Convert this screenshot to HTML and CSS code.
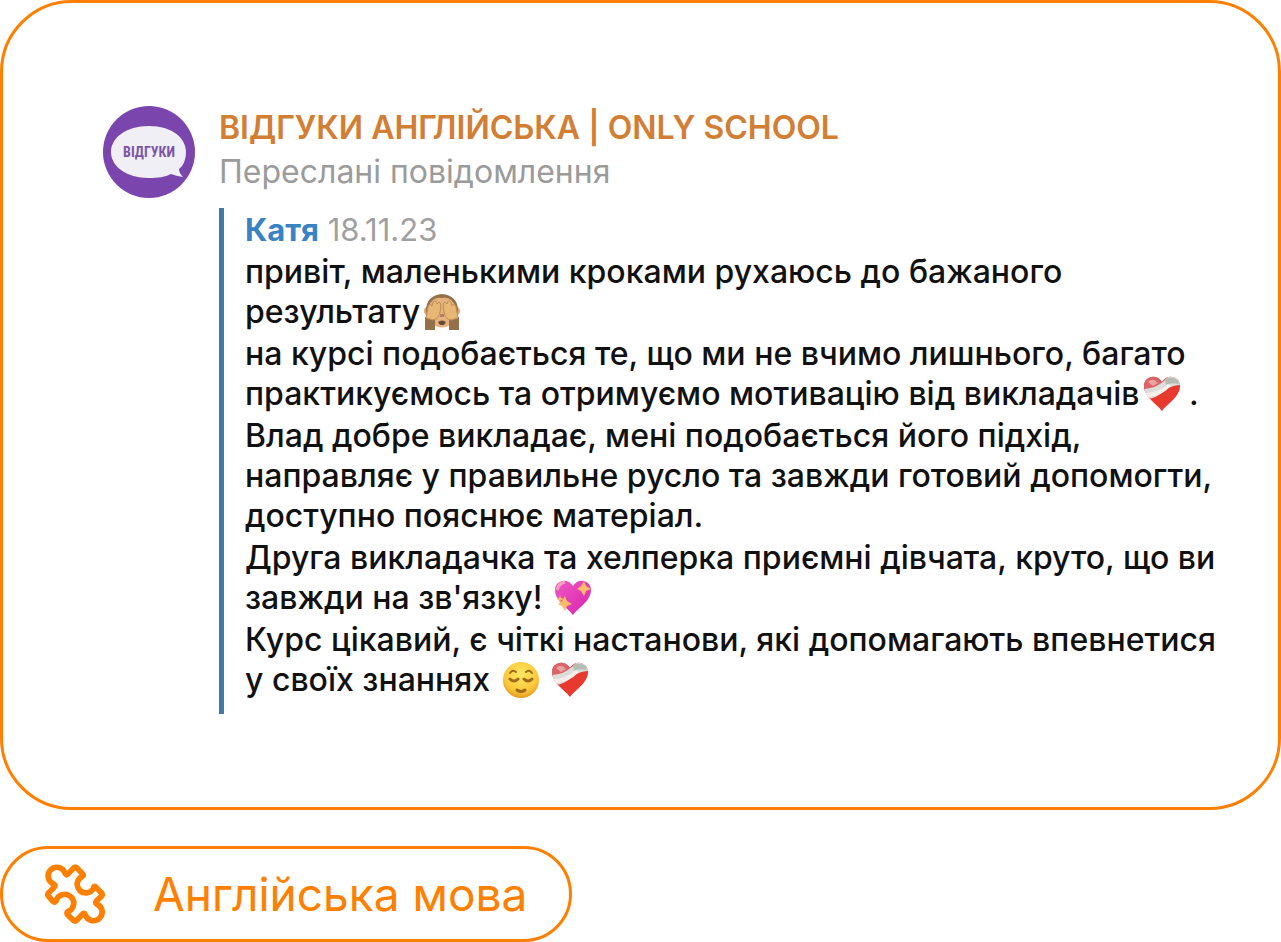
FILE: index.html
```html
<!DOCTYPE html>
<html lang="uk">
<head>
<meta charset="utf-8">
<meta name="viewport" content="width=device-width, initial-scale=1">
<title>Відгуки — Англійська мова</title>
<link rel="stylesheet" href="styles.css">
</head>
<body>
<svg class="defs" aria-hidden="true">
  <defs>
    <clipPath id="heart-clip"><path d="M19 36C14 29 1 22 1 11C1 1 14-2 19 7C24-2 37 1 37 11C37 22 24 29 19 36Z"/></clipPath>
    <linearGradient id="pink" x1="0" y1="0" x2="1" y2="1"><stop offset="0" stop-color="#f05ac8"/><stop offset="1" stop-color="#d91fa8"/></linearGradient>
    <radialGradient id="yellow" cx=".5" cy=".35" r=".65"><stop offset="0" stop-color="#ffe765"/><stop offset=".7" stop-color="#fbc93a"/><stop offset="1" stop-color="#e59a24"/></radialGradient>
    <symbol id="mended" viewBox="0 0 38 38">
      <g clip-path="url(#heart-clip)">
        <path fill="#e8392f" d="M0 0H38V38H0Z"/>
        <path fill="#d9646a" d="M0 0H22V16H0Z"/>
        <path fill="#e9a3a0" d="M5 7Q10 2 15 8L10 11Z"/>
        <path fill="#dcdcd8" d="M0 14Q12 14 21 6L27 0H38V10Q28 10 21 16Q14 23 4 24Z"/>
        <path fill="#b4bcb4" d="M22 4Q29 0 36 6L35 9Q28 7 23 10Z"/>
        <path fill="#f5efec" d="M2 18Q15 18 25 9L28 11Q17 22 5 22Z"/>
      </g>
    </symbol>
  </defs>
</svg>
<main class="page">
  <article class="card">
    <svg class="avatar" viewBox="0 0 92 92" role="img" aria-label="Відгуки">
      <circle cx="46" cy="46" r="46" fill="#7b45ae"/>
      <path fill="#f1eff6" d="M46 20C69 20 83 32 83 46C83 54 80 60 76 63Q76 67 80 71Q73 70 68 68C62 71 55 72 46 72C23 72 8 60 8 46C8 32 23 20 46 20Z"/>
      <text class="avatar-text" x="46" y="51" text-anchor="middle">ВІДГУКИ</text>
    </svg>
    <div class="content">
      <h1 class="channel">ВІДГУКИ АНГЛІЙСЬКА | ONLY SCHOOL</h1>
      <p class="forwarded">Переслані повідомлення</p>
      <blockquote class="quote">
        <p class="author"><strong class="name">Катя</strong> <time datetime="2023-11-18">18.11.23</time></p>
        <p class="line">привіт, маленькими кроками рухаюсь до бажаного<br>результату<svg class="emoji" viewBox="0 0 38 38" role="img" aria-label="мавпочка">
          <circle cx="5" cy="18" r="4" fill="#dca584"/><circle cx="33" cy="18" r="4" fill="#dca584"/>
          <path fill="#94714a" d="M3 18C3 7 9 2 19 1C29 2 35 7 35 18L32 27H6Z"/>
          <path fill="#e5b47e" d="M5 14Q10 3 19 5Q28 3 33 14L29 31Q19 38 9 31Z"/>
          <path fill="#94714a" d="M2 24L12 25L12 37H2ZM36 24L26 25L26 37H36Z"/>
          <path fill="#e7b774" stroke="#c28b55" d="M3 25L5 14Q7 9 9 13L10 9Q13 6 14 11L16 9Q19 10 17 19Q16 26 10 27ZM35 25L33 14Q31 9 29 13L28 9Q25 6 24 11L22 9Q19 10 21 19Q22 26 28 27Z"/>
          <path fill="#6b4936" d="M15 29Q19 26 23 29L21 32H17Z"/><path fill="#b87a63" d="M17 21H21V24H17Z"/>
        </svg></p>
        <p class="line">на курсі подобається те, що ми не вчимо лишнього, багато<br>практикуємось та отримуємо мотивацію від викладачів<svg class="emoji" role="img" aria-label="серце"><use href="#mended"/></svg> .</p>
        <p class="line">Влад добре викладає, мені подобається його підхід,<br>направляє у правильне русло та завжди готовий допомогти,<br>доступно пояснює матеріал.</p>
        <p class="line">Друга викладачка та хелперка приємні дівчата, круто, що ви<br>завжди на зв'язку! <svg class="emoji" viewBox="0 0 38 38" role="img" aria-label="сяюче серце">
          <g clip-path="url(#heart-clip)"><path fill="url(#pink)" d="M0 0H38V38H0Z"/><path fill="none" stroke="#f7a2bf" stroke-width="3" d="M3 11Q5 4 11 3"/></g>
          <path fill="#f9bd69" d="M30 2L32 7L37 10L32 12L30 17L27 12L23 10L27 7ZM11 17L13 22L18 25L13 27L11 32L8 27L4 25L8 22ZM6 16L7 19L10 20L7 21L6 24L5 21L2 20L5 19Z"/>
        </svg></p>
        <p class="line">Курс цікавий, є чіткі настанови, які допомагають впевнетися<br>у своїх знаннях <svg class="emoji" viewBox="0 0 38 38" role="img" aria-label="полегшення">
          <circle cx="19" cy="19" r="18" fill="url(#yellow)"/>
          <g fill="none" stroke="#a0681d" stroke-width="2" stroke-linecap="round"><path d="M8 12Q11 8 14 11M24 11Q27 8 30 12"/><path stroke-width="3" d="M8 18Q12 22 16 18M22 18Q26 22 30 18M15 29Q19 32 23 29"/></g>
        </svg> <svg class="emoji" role="img" aria-label="серце"><use href="#mended"/></svg></p>
      </blockquote>
    </div>
  </article>
  <a class="subject" href="#">
    <svg class="puzzle" viewBox="135 70 180 183" aria-hidden="true">
      <path d="M220 83Q226 77 232 83L248 100Q252 104 247 107A26 26 0 1 0 280 144Q281 134 287 139L304 156Q309 162 304 167L291 179Q284 186 290 190A26 26 0 1 1 256 223Q252 214 247 221L231 238Q226 244 220 239L203 222Q198 217 204 213A27 27 0 1 0 168 181Q164 187 159 182L146 167Q141 162 146 156L161 141Q169 134 161 130A26 26 0 1 1 195 97Q198 107 205 99Z"/>
    </svg>
    <span>Англійська мова</span>
  </a>
</main>
</body>
</html>
```
FILE: styles.css
```css
* { box-sizing: border-box; }

body {
  margin: 0;
  background: #fff;
  font-family: Inter, "Liberation Sans", sans-serif;
}

.defs { position: absolute; width: 0; height: 0; }

.page {
  display: flex;
  flex-direction: column;
  align-items: flex-start;
  gap: 36px;
}

.card {
  display: flex;
  align-items: flex-start;
  gap: 24px;
  width: 100%;
  padding: 103px 40px 93px 100px;
  border: 3px solid #ff7f00;
  border-radius: 72px;
}

.avatar { flex: none; width: 92px; height: 92px; }

.avatar-text {
  font: 700 14px "Roboto Condensed", "Open Sans", sans-serif;
  fill: #7b55a5;
}

.content { flex: 1; min-width: 0; }

.channel, .forwarded, .author, .line { margin: 0; }

.channel {
  font-size: 32px;
  font-weight: 600;
  line-height: 44px;
  color: #d27e35;
}

.forwarded {
  font-size: 32px;
  line-height: 44px;
  color: #9b9b9b;
}

.quote {
  margin: 14px 0 0;
  padding: 0 0 14px 21px;
  border-left: 5px solid #4579a3;
  font-size: 32px;
  color: #111;
}

.author {
  font-size: 31px;
  line-height: 44px;
  color: #a0a0a0;
}

.name { font-weight: 700; color: #3983c4; }

.line {
  font-weight: 500;
  line-height: 40px;
}

.line + .line { margin-top: 2px; }

.emoji {
  width: 38px;
  height: 38px;
  margin: -8px 0 -4px 3px;
  vertical-align: middle;
}

.subject {
  display: flex;
  align-items: center;
  gap: 48px;
  height: 96px;
  padding: 0 42px;
  border: 3px solid #ff7f00;
  border-radius: 48px;
  color: #ff7f00;
  font-size: 46px;
  font-weight: 400;
  text-decoration: none;
}

.puzzle {
  width: 60px;
  height: 61px;
  fill: none;
  stroke: currentColor;
  stroke-width: 17;
  stroke-linejoin: round;
}
```
